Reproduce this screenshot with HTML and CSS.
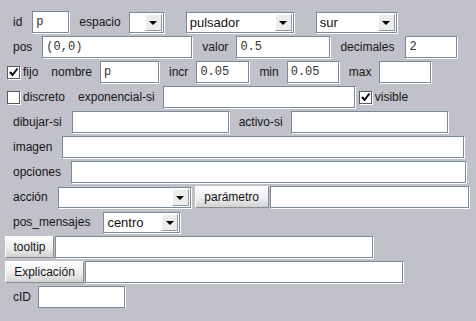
FILE: index.html
```html
<!DOCTYPE html>
<html lang="es">
<head>
  <meta charset="UTF-8">
  <title>pulsador</title>
  <link rel="stylesheet" href="styles.css">
</head>
<body>

  <div class="panel">

    <div class="row">
      <span class="lbl">id</span>
      <input type="text" class="txt f-id" value="p">
      <span class="lbl">espacio</span>
      <div class="combo f-espacio"><span class="val"></span><span class="arrow"><i></i></span></div>
      <div class="combo f-tipo wide-gap"><span class="val">pulsador</span><span class="arrow"><i></i></span></div>
      <div class="combo f-region wide-gap"><span class="val">sur</span><span class="arrow"><i></i></span></div>
    </div>

    <div class="row">
      <span class="lbl">pos</span>
      <input type="text" class="txt f-pos" value="(0,0)">
      <span class="lbl">valor</span>
      <input type="text" class="txt f-valor" value="0.5">
      <span class="lbl">decimales</span>
      <input type="text" class="txt f-small gap-dec" value="2">
    </div>

    <div class="row">
      <label class="check"><span class="box"><svg width="11" height="11" viewBox="0 0 11 11"><path d="M2 5 L4.5 8 L9.5 1.5" fill="none" stroke="#000" stroke-width="2"/></svg></span>fijo</label>
      <span class="lbl">nombre</span>
      <input type="text" class="txt f-nombre" value="p">
      <span class="lbl">incr</span>
      <input type="text" class="txt f-incr" value="0.05">
      <span class="lbl">min</span>
      <input type="text" class="txt f-small" value="0.05">
      <span class="lbl">max</span>
      <input type="text" class="txt f-small" value="">
    </div>

    <div class="row">
      <label class="check"><span class="box"></span>discreto</label>
      <span class="lbl">exponencial-si</span>
      <input type="text" class="txt f-exp" value="">
      <label class="check near"><span class="box"><svg width="11" height="11" viewBox="0 0 11 11"><path d="M2 5 L4.5 8 L9.5 1.5" fill="none" stroke="#000" stroke-width="2"/></svg></span>visible</label>
    </div>

    <div class="row">
      <span class="lbl">dibujar-si</span>
      <input type="text" class="txt f-cond" value="">
      <span class="lbl">activo-si</span>
      <input type="text" class="txt f-cond" value="">
    </div>

    <div class="row">
      <span class="lbl">imagen</span>
      <input type="text" class="txt f-imagen" value="">
    </div>

    <div class="row">
      <span class="lbl">opciones</span>
      <input type="text" class="txt f-opciones" value="">
    </div>

    <div class="row">
      <span class="lbl">acción</span>
      <div class="combo f-accion"><span class="val"></span><span class="arrow"><i></i></span></div>
      <button class="btn b-param">parámetro</button>
      <input type="text" class="txt f-param" value="">
    </div>

    <div class="row">
      <span class="lbl lbl-long">pos_mensajes</span>
      <div class="combo f-mensajes"><span class="val">centro</span><span class="arrow"><i></i></span></div>
    </div>

    <div class="row">
      <button class="btn b-tooltip">tooltip</button>
      <input type="text" class="txt f-tooltip" value="">
    </div>

    <div class="row">
      <button class="btn b-expl">Explicación</button>
      <input type="text" class="txt f-tooltip" value="">
    </div>

    <div class="row">
      <span class="lbl lbl-short">cID</span>
      <input type="text" class="txt f-cid" value="">
    </div>

  </div>

</body>
</html>
```

FILE: styles.css
```css
* {
  box-sizing: border-box;
}

body {
  margin: 0;
  background: #c1c1c9;
  font-family: "Liberation Sans", Arial, sans-serif;
  font-size: 12px;
  color: #161616;
}

.panel {
  display: flex;
  flex-direction: column;
  gap: 3px;
  padding: 11px 0 0 3px;
}

.row {
  display: flex;
  align-items: center;
  height: 22px;
}

.lbl {
  margin: 0 8px 0 10px;
  white-space: nowrap;
}

.row > .lbl:first-child {
  margin-right: 10px;
}

.row > .lbl-long:first-child {
  margin-right: 13px;
}

.row > .lbl-short:first-child {
  margin-right: 7px;
}

.txt {
  height: 22px;
  margin: 0;
  padding: 0 3px;
  border: 1px solid #7a8a99;
  box-shadow: 1px 1px 0 #fff;
  background: #fff;
  font-family: "Liberation Mono", "Courier New", monospace;
  font-size: 12px;
  color: #333;
  outline: none;
}

.f-id { width: 37px; }
.f-pos { width: 150px; }
.f-valor { width: 94px; }
.f-small { width: 52px; }
.f-nombre { width: 59px; }
.f-incr { width: 53px; }
.f-exp { width: 192px; }
.f-cond { width: 157px; }
.f-imagen { width: 402px; }
.f-opciones { width: 395px; }
.f-param { width: 199px; margin-left: 1px; }
.f-tooltip { width: 318px; margin-left: 1px; }
.f-cid { width: 87px; }

.gap-dec { margin-left: 3px; }

/* combo boxes */
.combo {
  display: flex;
  height: 21px;
  border: 1px solid #7a8a99;
  box-shadow: 1px 1px 0 #fff;
  background: #fff;
}

.combo .val {
  flex: 1;
  padding: 2px 0 0 3px;
  font-size: 13px;
  color: #111;
}

.combo .arrow {
  width: 17px;
  margin: 1px;
  border: 1px solid;
  border-color: #fff #8e9aa6 #8e9aa6 #fff;
  background: #ececec;
  display: flex;
  align-items: center;
  justify-content: center;
}

.combo .arrow i {
  width: 0;
  height: 0;
  margin-top: 1px;
  border-left: 4px solid transparent;
  border-right: 4px solid transparent;
  border-top: 4px solid #000;
}

.f-espacio { width: 35px; }
.f-tipo { width: 108px; }
.f-region { width: 81px; }
.f-accion { width: 133px; }
.f-mensajes { width: 77px; }

.wide-gap { margin-left: 22px; }

/* checkboxes */
.check {
  display: flex;
  align-items: center;
  margin-left: 4px;
  margin-right: 3px;
}

.check .box {
  width: 13px;
  height: 13px;
  margin-right: 3px;
  border: 1px solid #555c63;
  box-shadow: 1px 1px 0 #fff;
  background: #fff;
  display: flex;
  align-items: center;
  justify-content: center;
}

.check.near {
  margin-left: 4px;
}

/* buttons */
.btn {
  height: 22px;
  margin: 0;
  padding: 0;
  border: 1px solid;
  border-color: #fff #8a8d92 #8a8d92 #fff;
  background: linear-gradient(#fdfdfd, #eeeeee 55%, #d2d2d4);
  font-family: "Liberation Sans", Arial, sans-serif;
  font-size: 12px;
  color: #161616;
}

.b-param { width: 74px; margin-left: 4px; }
.b-tooltip { width: 49px; margin-left: 2px; }
.b-expl { width: 79px; margin-left: 2px; }
```
